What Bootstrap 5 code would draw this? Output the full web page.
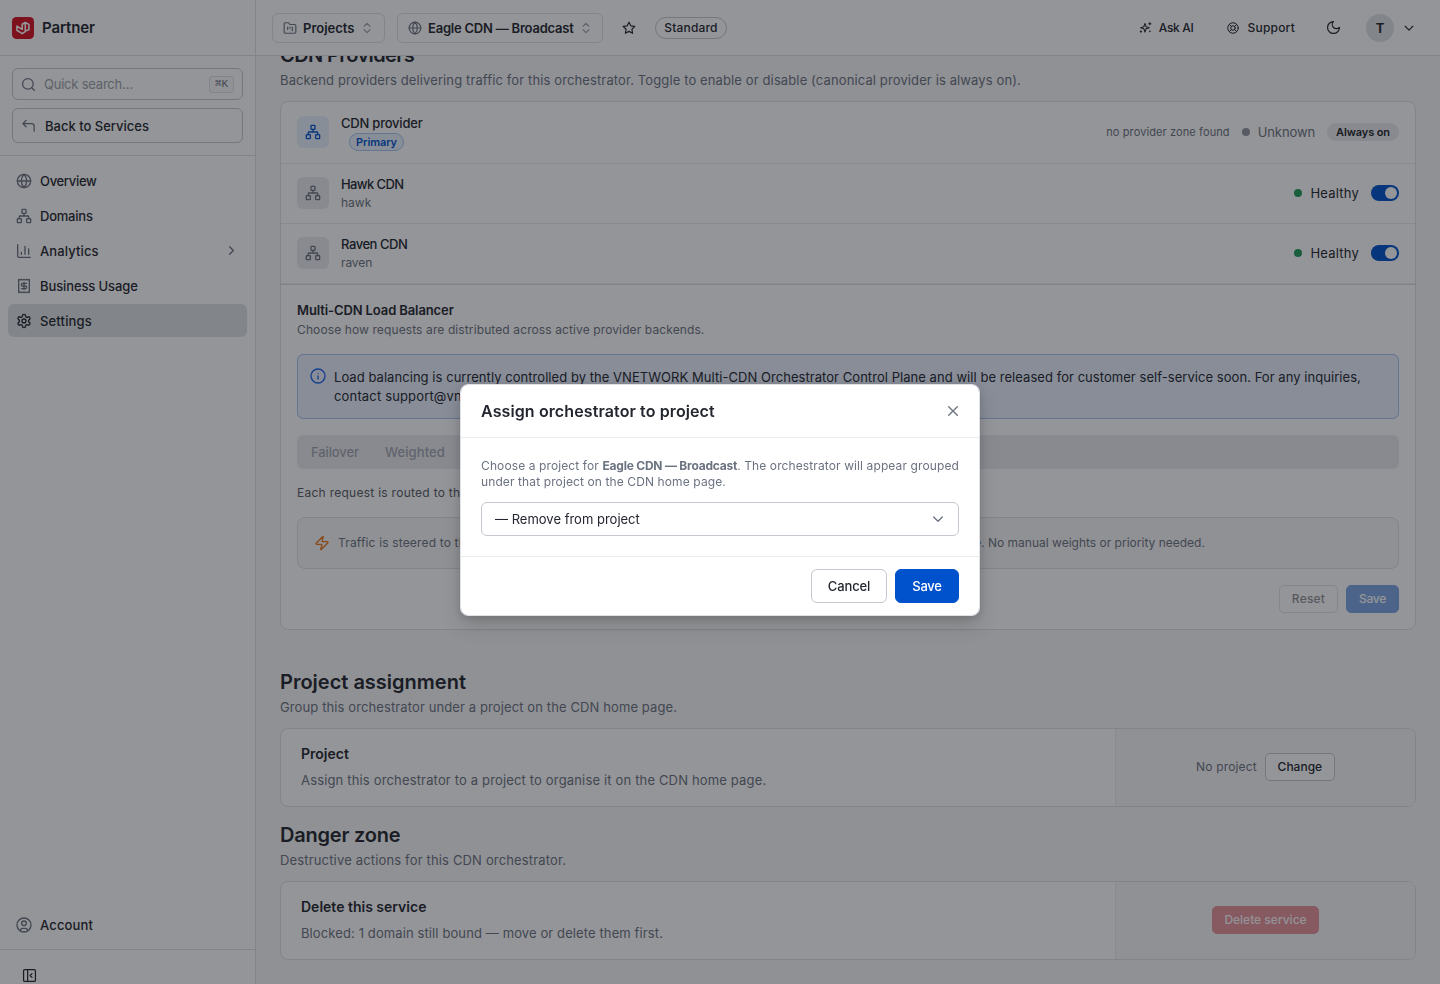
<!DOCTYPE html>
<html lang="en">
<head>
<meta charset="utf-8">
<meta name="viewport" content="width=device-width, initial-scale=1">
<title>Partner – CDN settings</title>
<link rel="stylesheet" href="https://cdn.jsdelivr.net/npm/bootstrap@5.3.0/dist/css/bootstrap.min.css">
<style>
:root{--ink:#23262f;--muted:#6b7280;--line:#dfe1e6;--line-strong:#c4c8cf;--soft:#ebecf0;--brand:#0052cc}
body{font-family:Inter,"Noto Sans",sans-serif;font-size:13px;line-height:20px;color:var(--ink);background:#f7f8f9;height:984px;overflow:hidden}
svg{fill:none;stroke:currentColor;stroke-width:2;stroke-linecap:round;stroke-linejoin:round;flex-shrink:0;display:block}
.sidebar{width:256px;border-right:1px solid var(--line);background:#fff}
.brand-bar,.topbar{height:56px;border-bottom:1px solid var(--line);background:#fff}
.brand-bar{padding-left:12px}
.brand-name{font-size:15px}
.side-top{padding:12px}
.field{height:32px;border:1px solid var(--line-strong);border-radius:6px}
.field.back{height:35px}
.field.back svg{margin:0 9px 0 8px}
.placeholder-text{color:#9ca1ab}
.keycap{font:11px/14px "Liberation Mono","DejaVu Sans Mono",monospace;border:1px solid var(--line);border-radius:3px;width:25px;height:17px;background:#fafafb}
.side-nav{gap:2px}
.side-link{height:33px;border-radius:6px;color:var(--ink)}
.side-link.active{background:#dfe3e6}
.side-foot{height:34px;padding:18px 0 0 22px}
.ico{color:var(--muted)}
.hair-b{border-bottom:1px solid var(--line)}
.hair-t{border-top:1px solid var(--line)}
.crumb{height:30px;border:1px solid var(--line);border-radius:6px;padding-left:10px}
.pill{font-size:12px;border:1px solid var(--line-strong);border-radius:20px;height:22px;width:72px}
.small12{font-size:12px}
.small11{font-size:11px}
.avatar{width:28px;height:28px;background:#dfe3e6;margin:0 8px 0 25px;font-size:13px}
.main-pane{overflow:hidden}
.scrolled{margin-top:-13px}
.h-section{font-size:20px;line-height:24px;font-weight:600;margin:0 0 4px}
.sub{color:var(--muted);margin:-1px 0 11px;line-height:20px}
.h-section{margin-bottom:4px}
.panel{border:1px solid var(--line);border-radius:8px;background:#fff;overflow:hidden}
.tile{width:32px;height:32px;border-radius:6px;background:var(--soft);color:var(--muted);margin-right:12px}
.tile.primary{background:#e9f2ff;color:var(--brand)}
.prov{height:60px;border-bottom:1px solid var(--soft);padding:0 16px 1px}
.prov.first{height:62px}
.prov-title{line-height:19px}
.prov-id{line-height:17px}
.tag-primary{height:18px;width:55px;border:1px solid #a9c5f5;background:#e9f2ff;color:var(--brand);border-radius:10px;font-size:11px;font-weight:600;margin-left:8px}
.tag-on{height:18px;width:72px;border-radius:10px;background:var(--soft);font-size:11px;font-weight:600}
.dot{width:8px;height:8px;border-radius:50%;background:#1f9d5b}
.dot.unk{background:#9296a0;margin:0 8px 0 12px}
.state{margin-right:12px}
.toggle{width:28px;height:16px;border-radius:8px;background:var(--brand);padding:2px}
.toggle i{width:12px;height:12px;border-radius:50%;background:#fff;display:block;margin-left:auto}
.notice{height:65px;border:1px solid #a9c5f5;border-radius:6px;background:#e9f0fd;padding:13px 12px 11px;line-height:19px}
.notice svg{margin-right:8px;color:#1d63ed}
.segs{height:34px;border-radius:6px;background:var(--soft);padding:2px;color:#a2a6af;gap:2px}
.seg{padding:0 12px}
.routing{color:#565b66;margin:14px 0}
.hint{height:52px;border:1px solid var(--line);border-radius:8px;background:#f7f8f9;color:var(--muted);font-size:12px}
.hint svg{color:#e8771a;margin-right:8px}
.b{display:inline-flex;align-items:center;justify-content:center;height:28px;border:1px solid var(--line-strong);border-radius:5px;background:#fff;font-size:12px;font-weight:500;color:var(--ink);padding:0}
.b.solid{background:var(--brand);border-color:var(--brand);color:#fff}
.b.danger{background:#d9303e;border-color:#d9303e;color:#fff}
.b.lg{height:34px;font-size:13px;border-radius:6px}
.off{opacity:.5}
.action-card{height:79px;margin-bottom:16px}
.action-main{padding:15px 20px}
.action-card h3{font-size:14px;font-weight:600;line-height:20px;margin:0 0 6px}
.action-side{width:300px;border-left:1px solid var(--soft);background:#f7f8f9;padding-bottom:1px}
.modal-backdrop.tint{background:rgb(17,19,26);opacity:.45}
.modal .assign{width:520px;max-width:520px;margin:384px auto 0}
.modal .modal-content{border:1px solid var(--line);border-radius:8px;color:var(--ink);box-shadow:0 10px 20px rgba(0,0,0,.15),0 2px 6px rgba(0,0,0,.12)}
.modal .modal-header{height:53px;padding:0 20px;border-color:var(--soft)}
.modal .modal-header span{font-size:16px}
.modal .modal-header svg{margin-right:-2px}
.modal .modal-body{padding:20px}
.modal .modal-body p{font-size:12px;line-height:16px;color:var(--muted);margin:0 0 12px}
.modal .modal-footer{height:59px;padding:0 20px;border-color:var(--soft)}
.pick{height:34px;border:1px solid var(--line-strong);border-radius:6px;padding:0 12px 0 13px}
.tp05{letter-spacing:.05px}.tp1{letter-spacing:.11px}.tp15{letter-spacing:.16px}.tp2{letter-spacing:.22px}.tp3{letter-spacing:.27px}
.tn1{letter-spacing:-.11px}.tn2{letter-spacing:-.22px}.tn3{letter-spacing:-.32px}.tn5{letter-spacing:-.45px}.tn6{letter-spacing:-.6px}
</style>
</head>
<body>
<svg class="d-none">
  <symbol id="net" viewBox="0 0 24 24"><rect x="16" y="16" width="6" height="6" rx="1"/><rect x="2" y="16" width="6" height="6" rx="1"/><rect x="9" y="2" width="6" height="6" rx="1"/><path d="M5 16v-3a1 1 0 0 1 1-1h12a1 1 0 0 1 1 1v3M12 12V8"/></symbol>
  <symbol id="globe" viewBox="0 0 24 24"><circle cx="12" cy="12" r="10"/><path d="M12 2a14.5 14.5 0 0 0 0 20 14.5 14.5 0 0 0 0-20M2 12h20"/></symbol>
  <symbol id="updown" viewBox="0 0 24 24"><path d="m7 15 5 5 5-5M7 9l5-5 5 5"/></symbol>
  <symbol id="down" viewBox="0 0 24 24"><path d="m5.500 9 6.500 6.500L18.500 9"/></symbol>
</svg>
<div class="d-flex h-100">
  <aside class="sidebar d-flex flex-column flex-shrink-0">
    <div class="brand-bar d-flex align-items-center gap-2 flex-shrink-0">
      <svg width="22" height="22" viewBox="0 0 22 22"><rect width="22" height="22" rx="4.500" fill="#d5101f" stroke="none"/><path d="M4.900 9.200v4.100l5.300 3.300 3-2M4.900 9.200l5.300 3.200V7.200l3.100-1.700 3.600 1.900v5.300l-3.600 1.300V5.500" stroke="#fff" stroke-width="1.600"/></svg>
      <span class="brand-name fw-semibold tn1">Partner</span>
    </div>
    <div class="side-top hair-b flex-shrink-0">
      <div class="field d-flex align-items-center px-2 mb-2">
        <svg class="ico" width="15" height="15" viewBox="0 0 24 24"><circle cx="11" cy="11" r="8.500"/><path d="m21.500 21.500-4.300-4.300"/></svg>
        <span class="placeholder-text tn2 flex-grow-1 ms-2">Quick search…</span>
        <span class="keycap ico text-center">⌘K</span>
      </div>
      <div class="field back d-flex align-items-center fw-medium">
        <svg class="ico" width="15" height="15" viewBox="0 0 24 24"><path d="M21 21v-8a4 4 0 0 0-4-4H3M8 14 3 9l5-5"/></svg>Back to Services
      </div>
    </div>
    <nav class="side-nav d-flex flex-column px-2 pt-2 flex-grow-1 fw-medium">
      <a class="side-link d-flex align-items-center gap-2 px-2 text-decoration-none tn3"><svg class="ico" width="16" height="16"><use href="#globe"/></svg>Overview</a>
      <a class="side-link d-flex align-items-center gap-2 px-2 text-decoration-none tn2"><svg class="ico" width="16" height="16"><use href="#net"/></svg>Domains</a>
      <a class="side-link d-flex align-items-center gap-2 px-2 text-decoration-none tp1"><svg class="ico" width="16" height="16" viewBox="0 0 24 24"><path d="M2.500 2.500v17a2 2 0 0 0 2 2h17M19 17V9M13.500 17V5M8 17v-3"/></svg><span class="flex-grow-1">Analytics</span><svg class="ico" width="15" height="15" viewBox="0 0 24 24"><path d="m9 18 6-6-6-6"/></svg></a>
      <a class="side-link d-flex align-items-center gap-2 px-2 text-decoration-none tn1"><svg class="ico" width="16" height="16" viewBox="0 0 24 24"><path d="M4 2v20l2-1 2 1 2-1 2 1 2-1 2 1 2-1 2 1V2l-2 1-2-1-2 1-2-1-2 1-2-1-2 1ZM16 8h-6a2 2 0 1 0 0 4h4a2 2 0 1 1 0 4H8M12 17.500v-11"/></svg>Business Usage</a>
      <a class="side-link active d-flex align-items-center gap-2 px-2 text-decoration-none tp15"><svg width="16" height="16" viewBox="0 0 24 24"><path d="M12.220 2h-.44a2 2 0 0 0-2 2v.18a2 2 0 0 1-1 1.730l-.43.25a2 2 0 0 1-2 0l-.15-.08a2 2 0 0 0-2.730.73l-.22.38a2 2 0 0 0 .73 2.730l.15.1a2 2 0 0 1 1 1.720v.51a2 2 0 0 1-1 1.740l-.15.09a2 2 0 0 0-.73 2.730l.22.38a2 2 0 0 0 2.730.73l.15-.08a2 2 0 0 1 2 0l.43.25a2 2 0 0 1 1 1.730V20a2 2 0 0 0 2 2h.44a2 2 0 0 0 2-2v-.18a2 2 0 0 1 1-1.730l.43-.25a2 2 0 0 1 2 0l.15.08a2 2 0 0 0 2.730-.73l.22-.39a2 2 0 0 0-.73-2.730l-.15-.08a2 2 0 0 1-1-1.740v-.5a2 2 0 0 1 1-1.740l.15-.09a2 2 0 0 0 .73-2.730l-.22-.38a2 2 0 0 0-2.730-.73l-.15.08a2 2 0 0 1-2 0l-.43-.25a2 2 0 0 1-1-1.730V4a2 2 0 0 0-2-2z"/><circle cx="12" cy="12" r="3"/></svg>Settings</a>
    </nav>
    <div class="px-2 pb-2 hair-b fw-medium">
      <a class="side-link d-flex align-items-center gap-2 px-2 text-decoration-none tp15"><svg class="ico" width="16" height="16" viewBox="0 0 24 24"><circle cx="12" cy="12" r="10.500"/><circle cx="12" cy="9.500" r="3.500"/><path d="M6.500 20.500c.3-2.300 1.700-3.500 3.500-3.500h4c1.800 0 3.200 1.200 3.500 3.500"/></svg>Account</a>
    </div>
    <div class="side-foot"><svg width="15" height="15" viewBox="0 0 24 24"><rect x="2.500" y="2.500" width="19" height="19" rx="2"/><path d="M9 3v18M16 15l-3-3 3-3"/></svg></div>
  </aside>

  <div class="flex-grow-1 d-flex flex-column" style="min-width:0">
    <header class="topbar d-flex align-items-center px-3 flex-shrink-0">
      <div class="crumb d-flex align-items-center fw-semibold" style="width:113px"><svg class="ico" width="14" height="14" viewBox="0 0 24 24"><path d="M4 21h16a2 2 0 0 0 2-2V8a2 2 0 0 0-2-2h-8l-2.400-3H4a2 2 0 0 0-2 2v14c0 1.100.9 2 2 2ZM8 10.500v4M12 10.500v2M16 10.500v6"/></svg><span style="margin:0 6px">Projects</span><svg class="placeholder-text" width="14" height="14"><use href="#updown"/></svg></div>
      <div class="crumb d-flex align-items-center fw-semibold tn2" style="width:206px;margin-left:12px"><svg class="ico" width="14" height="14"><use href="#globe"/></svg><span style="margin:0 5px 0 6px">Eagle CDN — Broadcast</span><svg class="placeholder-text" width="14" height="14"><use href="#updown"/></svg></div>
      <svg style="margin:0 19px" width="14" height="14" viewBox="0 0 24 24"><path d="m12 2 3.100 6.300 6.900 1-5 4.900 1.200 6.900L12 17.800l-6.200 3.300L7 14.200 2 9.300l6.900-1z"/></svg>
      <span class="pill d-flex align-items-center justify-content-center fw-medium tp15">Standard</span>
      <div class="ms-auto d-flex align-items-center small12 fw-medium">
        <svg width="13" height="13" viewBox="0 0 24 24"><path d="M11 4.500 13 10.500 19 12.500 13 14.500 11 20.500 9 14.500 3 12.500 9 10.500zM20 3v4M18 5h4"/><circle cx="3.500" cy="19.500" r="1"/><circle cx="20" cy="19" r=".6"/></svg>
        <span class="tn3" style="margin:0 34px 0 7px">Ask AI</span>
        <svg width="12" height="12" viewBox="0 0 24 24"><circle cx="12" cy="12" r="10.500"/><circle cx="12" cy="12" r="4.500"/><path d="m4.900 4.900 4 4M15.100 8.900l4-4M15.100 15.100l4 4M8.900 15.100l-4 4"/></svg>
        <span class="tp2" style="margin:0 31px 0 8px">Support</span>
        <svg width="15" height="15" viewBox="0 0 24 24"><path d="M12 2.500a6.500 6.500 0 0 0 9.500 9.500 9.500 9.500 0 1 1-9.500-9.500Z"/></svg>
        <span class="avatar rounded-circle d-flex align-items-center justify-content-center fw-bold">T</span>
        <svg class="me-2" width="14" height="14"><use href="#down"/></svg>
      </div>
    </header>

    <main class="main-pane flex-grow-1 px-4">
      <div class="scrolled">
        <h2 class="h-section tn6">CDN Providers</h2>
        <p class="sub" style="letter-spacing:.12px">Backend providers delivering traffic for this orchestrator. Toggle to enable or disable (canonical provider is always on).</p>
        <section class="panel" style="margin-bottom:40px">
          <div class="prov first d-flex align-items-center">
            <span class="tile primary d-flex align-items-center justify-content-center"><svg width="16" height="16"><use href="#net"/></svg></span>
            <div><div class="fw-medium tn2 prov-title">CDN provider</div><div class="tag-primary d-flex align-items-center justify-content-center tn1">Primary</div></div>
            <div class="ms-auto d-flex align-items-center ico"><span class="small11 tp1">no provider zone found</span><i class="dot unk"></i><span class="tn1 state">Unknown</span><span class="tag-on text-dark d-flex align-items-center justify-content-center tn1">Always on</span></div>
          </div>
          <div class="prov d-flex align-items-center">
            <span class="tile d-flex align-items-center justify-content-center"><svg width="16" height="16"><use href="#net"/></svg></span>
            <div><div class="fw-medium tn6 prov-title">Hawk CDN</div><div class="small12 ico prov-id">hawk</div></div>
            <div class="ms-auto d-flex align-items-center"><i class="dot me-2"></i><span class="tp2 state">Healthy</span><span class="toggle"><i></i></span></div>
          </div>
          <div class="prov d-flex align-items-center">
            <span class="tile d-flex align-items-center justify-content-center"><svg width="16" height="16"><use href="#net"/></svg></span>
            <div><div class="fw-medium tn5 prov-title">Raven CDN</div><div class="small12 ico tn1 prov-id">raven</div></div>
            <div class="ms-auto d-flex align-items-center"><i class="dot me-2"></i><span class="tp2 state">Healthy</span><span class="toggle"><i></i></span></div>
          </div>
          <div class="hair-t px-3 pb-3" style="padding-top:15px">
            <div class="fw-semibold tn1">Multi-CDN Load Balancer</div>
            <div class="small12 ico tp1" style="margin-bottom:14px">Choose how requests are distributed across active provider backends.</div>
            <div class="notice d-flex">
              <svg width="16" height="16" viewBox="0 0 24 24"><circle cx="12" cy="12" r="10.500"/><path d="M12 16.500V12M12 8h.01"/></svg>
              <span class="tp05">Load balancing is currently controlled by the VNETWORK Multi-CDN Orchestrator Control Plane and will be released for customer self-service soon. For any inquiries, <span class="tp15">contact support@vnetwork.vn.</span></span>
            </div>
            <div class="segs d-flex align-items-center mt-3 fw-medium"><span class="seg tn1">Failover</span><span class="seg tp1">Weighted</span><span class="seg">Auto</span></div>
            <div class="small12 tp3 routing">Each request is routed to the best available provider backend.</div>
            <div class="hint d-flex align-items-center px-3"><svg width="16" height="16" viewBox="0 0 24 24"><path d="M4 14a1 1 0 0 1-.78-1.630l9.900-10.200a.5.5 0 0 1 .86.46l-1.920 6.020A1 1 0 0 0 13 10h7a1 1 0 0 1 .78 1.630l-9.900 10.200a.5.5 0 0 1-.86-.46l1.920-6.020A1 1 0 0 0 11 14z"/></svg><span><span class="tp15">Traffic is steered to the best-performing provider automatically, based on live latency and uptime at each</span> edge. No manual weights or priority needed.</span></div>
            <div class="d-flex justify-content-end gap-2 mt-3"><button class="b off tp2" style="width:59px">Reset</button><button class="b solid off tn2" style="width:53px">Save</button></div>
          </div>
        </section>

        <h2 class="h-section">Project assignment</h2>
        <p class="sub tp1">Group this orchestrator under a project on the CDN home page.</p>
        <section class="panel action-card d-flex">
          <div class="action-main flex-grow-1"><h3>Project</h3><div class="ico tp15">Assign this orchestrator to a project to organise it on the CDN home page.</div></div>
          <div class="action-side d-flex align-items-center justify-content-center gap-2"><span class="small12 ico tp15">No project</span><button class="b" style="width:70px">Change</button></div>
        </section>
        <h2 class="h-section tn2">Danger zone</h2>
        <p class="sub tp15">Destructive actions for this CDN orchestrator.</p>
        <section class="panel action-card d-flex">
          <div class="action-main flex-grow-1"><h3>Delete this service</h3><div class="ico tp1">Blocked: 1 domain still bound — move or delete them first.</div></div>
          <div class="action-side d-flex align-items-center justify-content-center"><button class="b danger off" style="width:107px">Delete service</button></div>
        </section>
      </div>
    </main>
  </div>
</div>

<div class="modal-backdrop tint"></div>
<div class="modal d-block" tabindex="-1" role="dialog">
  <div class="modal-dialog assign">
    <div class="modal-content">
      <div class="modal-header">
        <span class="fw-semibold tp1">Assign orchestrator to project</span>
        <svg class="ico" width="16" height="16" viewBox="0 0 24 24"><path d="M18.500 5.500l-13 13M5.500 5.500l13 13"/></svg>
      </div>
      <div class="modal-body">
        <p class="tp1">Choose a project for <b class="tn2">Eagle CDN — Broadcast</b>. The orchestrator will appear grouped under that project on the CDN home page.</p>
        <div class="pick d-flex align-items-center justify-content-between"><span>— Remove from project</span><svg class="ico" width="16" height="16"><use href="#down"/></svg></div>
      </div>
      <div class="modal-footer flex-nowrap gap-2"><button class="b lg m-0 tn1" style="width:76px">Cancel</button><button class="b lg solid m-0 tn2" style="width:64px">Save</button></div>
    </div>
  </div>
</div>
<script src="https://cdn.jsdelivr.net/npm/bootstrap@5.3.0/dist/js/bootstrap.bundle.min.js"></script>
</body>
</html>
